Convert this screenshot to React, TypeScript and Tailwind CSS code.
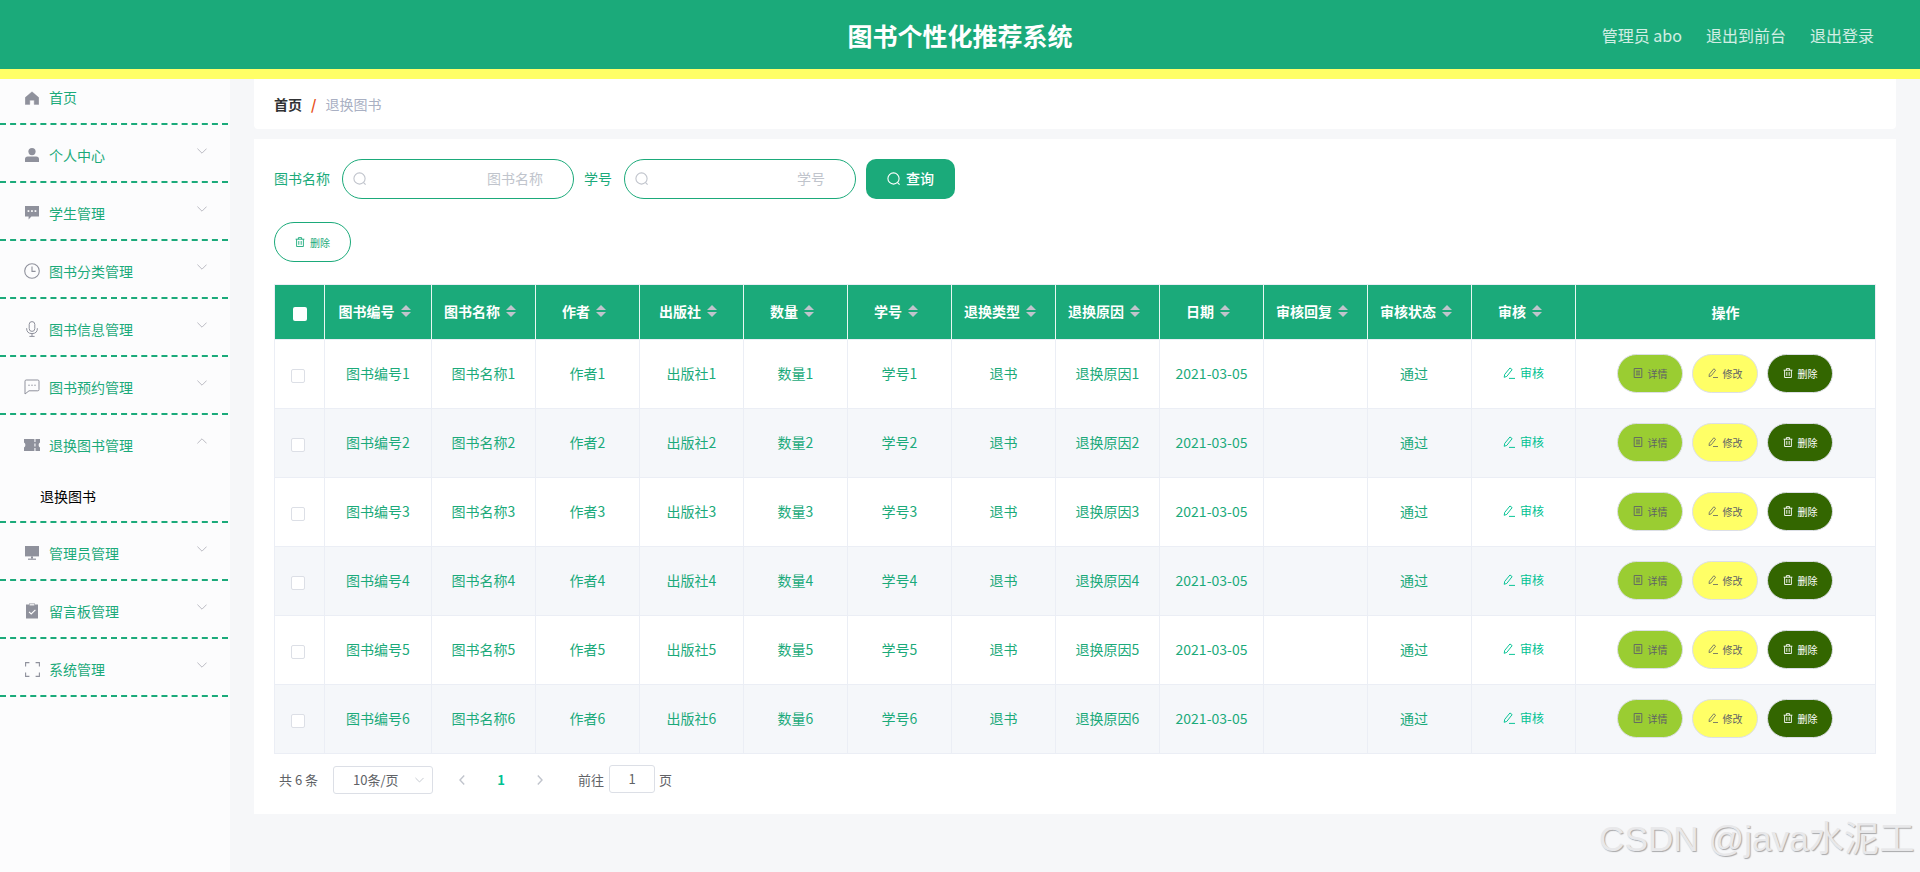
import React from "react";

const Home = () => (
  <svg viewBox="0 0 14 14" className="w-[14px] h-[14px] mt-[2px]" fill="#8f919c">
    <path d="M7 .8 L13.8 6.6 V13.4 H9.2 V9.2 H4.8 V13.4 H.2 V6.6 Z" strokeLinejoin="round" stroke="#8f919c" strokeWidth="0.4" />
  </svg>
);
const User = () => (
  <svg viewBox="0 0 14 14" className="w-[14px] h-[14px]" fill="#8f919c">
    <circle cx="7" cy="3.6" r="3.6" />
    <path d="M0 14 V11 Q0 8.4 2.8 8.4 H11.2 Q14 8.4 14 11 V14 Z" />
  </svg>
);
const Comment = () => (
  <svg viewBox="0 0 14 14" className="w-[14px] h-[14px]">
    <path d="M0 0 H14 V10.4 H6.4 L3.6 13.6 V10.4 H0 Z" fill="#8f919c" />
    <rect x="2.6" y="4.2" width="1.7" height="1.7" fill="#fff" />
    <rect x="6.1" y="4.2" width="1.7" height="1.7" fill="#fff" />
    <rect x="9.6" y="4.2" width="1.7" height="1.7" fill="#fff" />
  </svg>
);
const Clock = () => (
  <svg viewBox="0 0 16 16" className="w-[16px] h-[16px]" fill="none" stroke="#8f919c" strokeWidth="1.1">
    <circle cx="8" cy="8" r="7.3" />
    <path d="M8 3.6 V8.4 H11.6" />
  </svg>
);
const Mic = () => (
  <svg viewBox="0 0 14 16" className="w-[14px] h-[16px]" fill="none" stroke="#8f919c" strokeWidth="1">
    <rect x="4.2" y="0.6" width="5.6" height="9.8" rx="2.8" />
    <path d="M1.6 7.2 Q1.6 12.6 7 12.6 Q12.4 12.6 12.4 7.2 M7 12.6 V15.4 M4.4 15.4 H9.6" />
  </svg>
);
const ChatDot = () => (
  <svg viewBox="0 0 16 16" className="w-[16px] h-[16px]" fill="none" stroke="#8f919c" strokeWidth="1">
    <path d="M2.2 1 H13.8 Q15 1 15 2.2 V10.6 Q15 11.8 13.8 11.8 H5 L1 15 V2.2 Q1 1 2.2 1 Z" strokeLinejoin="round" />
    <circle cx="5" cy="6.3" r="0.7" fill="#8f919c" stroke="none" />
    <circle cx="8" cy="6.3" r="0.7" fill="#8f919c" stroke="none" />
    <circle cx="11" cy="6.3" r="0.7" fill="#8f919c" stroke="none" />
  </svg>
);
const Ticket = () => (
  <svg viewBox="0 0 16 12" className="w-[16px] h-[12px]">
    <path d="M0 0 H16 V3.6 Q14.6 4.2 14.6 6 Q14.6 7.8 16 8.4 V12 H0 V8.4 Q1.4 7.8 1.4 6 Q1.4 4.2 0 3.6 Z" fill="#8f919c" />
    <rect x="10.4" y="0" width="1.1" height="3" fill="#fcfcfd" />
    <rect x="10.4" y="4.5" width="1.1" height="3" fill="#fcfcfd" />
    <rect x="10.4" y="9" width="1.1" height="3" fill="#fcfcfd" />
  </svg>
);
const Platform = () => (
  <svg viewBox="0 0 14 14" className="w-[14px] h-[14px]" fill="#8f919c">
    <rect x="0" y="0" width="14" height="10.4" />
    <rect x="6" y="10.4" width="2" height="2.2" />
    <rect x="3" y="12.6" width="8" height="1.2" />
  </svg>
);
const Claim = () => (
  <svg viewBox="0 0 14 16" className="w-[14px] h-[16px]">
    <path d="M1 1.6 H4 V0.6 H10 V1.6 H13 V15.6 H1 Z" fill="#8f919c" />
    <rect x="4.6" y="1.2" width="4.8" height="1.2" fill="#fff" />
    <path d="M4 8.8 L6.2 11 L10.4 6.8" fill="none" stroke="#fff" strokeWidth="1.1" />
  </svg>
);
const FullScreen = () => (
  <svg viewBox="0 0 15 15" className="w-[15px] h-[15px]" fill="none" stroke="#8f919c" strokeWidth="1.1">
    <path d="M.6 4.4 V.6 H4.4 M10.6 .6 H14.4 V4.4 M14.4 10.6 V14.4 H10.6 M4.4 14.4 H.6 V10.6" />
  </svg>
);

const Chevron = ({ up }: { up?: boolean }) => (
  <svg viewBox="0 0 10 6" className="w-[10px] h-[6px]" fill="none" stroke="#b4b4bc" strokeWidth="0.9">
    <path d={up ? "M.4 5.4 L5 .8 L9.6 5.4" : "M.4 .6 L5 5.2 L9.6 .6"} />
  </svg>
);

const SearchIcon = ({ color = "#c0c4cc" }: { color?: string }) => (
  <svg viewBox="0 0 14 14" className="w-[14px] h-[14px]" fill="none" stroke={color} strokeWidth="1.1">
    <circle cx="6.5" cy="6.5" r="5.6" />
    <path d="M10.6 10.6 L12.6 12.6" />
  </svg>
);

const Trash = ({ color }: { color: string }) => (
  <svg viewBox="0 0 10 10" className="w-[10px] h-[10px]" fill="none" stroke={color} strokeWidth="0.9">
    <path d="M.6 2.2 H9.4 M3.4 2.2 V.6 H6.6 V2.2 M1.6 2.2 V9.5 H8.4 V2.2 M3.8 4 V7.8 M6.2 4 V7.8" />
  </svg>
);
const Tickets = ({ color }: { color: string }) => (
  <svg viewBox="0 0 10 10" className="w-[10px] h-[10px]" fill="none" stroke={color} strokeWidth="0.9">
    <path d="M1.2 .5 H8.8 V9.5 H1.2 Z M3 3.2 H7 M3 5 H7 M3 6.8 H7" />
  </svg>
);
const Edit = ({ color, size = "w-[10px] h-[10px]" }: { color: string; size?: string }) => (
  <svg viewBox="0 0 10 10" className={size} fill="none" stroke={color} strokeWidth="0.8">
    <path d="M1 8.6 L1.4 6.2 L5.8 .8 L7.6 2.2 L3.2 7.8 Z M5 9.5 H10" />
  </svg>
);

const Caret = () => (
  <span className="flex flex-col gap-[2px] ml-[6px] mr-[7px]">
    <span className="w-0 h-0 border-x-[5px] border-x-transparent border-b-[5px] border-b-[#c0c4cc]" />
    <span className="w-0 h-0 border-x-[5px] border-x-transparent border-t-[5px] border-t-[#c0c4cc]" />
  </span>
);

const menu: { label: string; icon: React.ReactNode; arrow?: boolean; open?: boolean }[] = [
  { label: "首页", icon: <Home /> },
  { label: "个人中心", icon: <User />, arrow: true },
  { label: "学生管理", icon: <Comment />, arrow: true },
  { label: "图书分类管理", icon: <Clock />, arrow: true },
  { label: "图书信息管理", icon: <Mic />, arrow: true },
  { label: "图书预约管理", icon: <ChatDot />, arrow: true },
  { label: "退换图书管理", icon: <Ticket />, arrow: true, open: true },
  { label: "管理员管理", icon: <Platform />, arrow: true },
  { label: "留言板管理", icon: <Claim />, arrow: true },
  { label: "系统管理", icon: <FullScreen />, arrow: true },
];

const heads = ["图书编号", "图书名称", "作者", "出版社", "数量", "学号", "退换类型", "退换原因", "日期", "审核回复", "审核状态", "审核"];

const rows = [1, 2, 3, 4, 5, 6];

const td = "border-r border-b border-[#ebeef5] p-0 pb-[2px]";

const CheckBox = ({ head }: { head?: boolean }) =>
  head ? (
    <span className="inline-block w-[14px] h-[14px] rounded-[2px] bg-white align-middle" />
  ) : (
    <span className="inline-block w-[14px] h-[14px] rounded-[2px] bg-white border border-[#dcdfe6] align-middle mr-[3px] mt-[2px]" />
  );

const OpButton = ({ bg, fg, icon, label }: { bg: string; fg: string; icon: React.ReactNode; label: string }) => (
  <button className={`w-[66px] h-[39px] rounded-[20px] border border-[#dcdfe6] flex items-center justify-center gap-[5px] text-[10px] ${bg} ${fg}`}>
    {icon}
    <span>{label}</span>
  </button>
);

const SearchInput = ({ placeholder }: { placeholder: string }) => (
  <div className="relative w-[232px] h-[40px]">
    <span className="absolute left-[11px] top-[13px] flex">
      <SearchIcon />
    </span>
    <input
      readOnly
      placeholder={placeholder}
      className="w-full h-full rounded-[20px] border border-[#1baa7a] bg-white text-right pr-[30px] pb-[2px] text-[14px] outline-none placeholder:text-[#c0c4cc]"
    />
  </div>
);

export default function App() {
  return (
    <div className="relative w-[1920px] h-[872px] overflow-hidden flex flex-col bg-[#f6f7f9] [font-family:'Noto_Sans_CJK_SC','Noto_Sans',sans-serif] text-[14px]">
      <header className="relative z-10 h-[79px] shrink-0 bg-[#1baa7a] border-b-[10px] border-[#ffff66] flex items-center justify-between">
        <div className="w-[400px]" />
        <h1 className="text-[25px] leading-none font-bold text-white pt-[2px]">图书个性化推荐系统</h1>
        <nav className="w-[400px] flex justify-end gap-[24px] pr-[46px] text-[16px] text-white/80">
          <span>管理员 abo</span>
          <span>退出到前台</span>
          <span>退出登录</span>
        </nav>
      </header>

      <div className="flex flex-1 min-h-0">
        <aside className="w-[230px] shrink-0 bg-[#fcfcfd]">
          <ul className="w-[228px] -mt-[12px]">
            {menu.map((m) => (
              <li key={m.label} className="border-b-2 border-dashed border-[#1baa7a]">
                <div className="h-[56px] flex items-center pt-[4px] relative text-[#1baa7a]">
                  <span className="w-[16px] ml-[24px] flex justify-center">{m.icon}</span>
                  <span className="ml-[9px]">{m.label}</span>
                  {m.arrow && (
                    <span className="absolute left-[197px] top-[23px] flex">
                      <Chevron up={m.open} />
                    </span>
                  )}
                </div>
                {m.open && <div className="h-[50px] flex items-center pl-[40px] text-black">退换图书</div>}
              </li>
            ))}
          </ul>
        </aside>

        <main className="flex-1 px-[24px]">
          <div className="h-[50px] bg-white rounded-b-[4px] flex items-center pl-[20px]">
            <span className="font-bold text-[#303133]">首页</span>
            <span className="mx-[9px] font-bold text-[#e8501a]">/</span>
            <span className="text-[#a9b0c3]">退换图书</span>
          </div>

          <section className="mt-[10px] h-[675px] bg-white p-[20px]">
            <div className="flex items-center text-[#1baa7a]">
              <span className="-mt-[1px]">图书名称</span>
              <span className="ml-[12px]"><SearchInput placeholder="图书名称" /></span>
              <span className="ml-[10px] -mt-[1px]">学号</span>
              <span className="ml-[12px]"><SearchInput placeholder="学号" /></span>
              <button className="ml-[10px] w-[89px] h-[40px] rounded-[10px] bg-[#1baa7a] text-white font-medium flex items-center justify-center gap-[5px] pb-[1px]">
                <SearchIcon color="#ffffff" />
                <span>查询</span>
              </button>
            </div>

            <button className="mt-[23px] w-[77px] h-[40px] rounded-[20px] border border-[#1baa7a] bg-white text-[#1baa7a] text-[10px] flex items-center justify-center gap-[5px]">
              <Trash color="#1baa7a" />
              <span>删除</span>
            </button>

            <table className="mt-[22px] w-[1602px] table-fixed border-separate border-spacing-0 border-l border-t border-[#ebeef5]">
              <colgroup>
                <col className="w-[50px]" />
                <col className="w-[107px]" />
                {heads.slice(1).map((h) => (
                  <col key={h} className="w-[104px]" />
                ))}
                <col className="w-[300px]" />
              </colgroup>
              <thead>
                <tr className="h-[55px] bg-[#1baa7a] text-white">
                  <th className="border-r border-r-white/90 border-b border-b-[#ebeef5] p-0 text-center">
                    <CheckBox head />
                  </th>
                  {heads.map((h) => (
                    <th key={h} className="border-r border-r-white/90 border-b border-b-[#ebeef5] p-0 font-bold">
                      <span className="flex items-center justify-center -mt-[2px]">
                        {h}
                        <Caret />
                      </span>
                    </th>
                  ))}
                  <th className="border-r border-b border-[#ebeef5] p-0 font-bold">操作</th>
                </tr>
              </thead>
              <tbody>
                {rows.map((n) => (
                  <tr key={n} className={`h-[69px] ${n % 2 === 0 ? "bg-[#f5f7fa]" : "bg-white"} text-[#1baa7a] text-center`}>
                    <td className={td}>
                      <CheckBox />
                    </td>
                    <td className={td}>图书编号{n}</td>
                    <td className={td}>图书名称{n}</td>
                    <td className={td}>作者{n}</td>
                    <td className={td}>出版社{n}</td>
                    <td className={td}>数量{n}</td>
                    <td className={td}>学号{n}</td>
                    <td className={td}>退书</td>
                    <td className={td}>退换原因{n}</td>
                    <td className={td}>2021-03-05</td>
                    <td className={td}></td>
                    <td className={`${td} pr-[11px]`}>通过</td>
                    <td className={`${td} text-[12px] text-[#00c292]`}>
                      <span className="inline-flex items-center gap-[5px]">
                        <Edit color="#00c292" size="w-[12px] h-[12px]" />
                        审核
                      </span>
                    </td>
                    <td className={td}>
                      <div className="flex justify-center gap-[9px] pr-[1px]">
                        <OpButton bg="bg-[#9acd32]" fg="text-[#606266]" icon={<Tickets color="#606266" />} label="详情" />
                        <OpButton bg="bg-[#ffff66]" fg="text-[#606266]" icon={<Edit color="#606266" />} label="修改" />
                        <OpButton bg="bg-[#336600]" fg="text-white" icon={<Trash color="#ffffff" />} label="删除" />
                      </div>
                    </td>
                  </tr>
                ))}
              </tbody>
            </table>

            <div className="mt-[12px] h-[28px] flex items-center pl-[5px] text-[13px] text-[#606266]">
              <span>共 6 条</span>
              <div className="ml-[15px] w-[100px] h-[28px] rounded-[3px] border border-[#dcdfe6] flex items-center pl-[19px] relative">
                10条/页
                <span className="absolute right-[8px] top-[10px] flex">
                  <svg viewBox="0 0 10 6" className="w-[9px] h-[6px]" fill="none" stroke="#c0c4cc" strokeWidth="1">
                    <path d="M.5 .7 L5 5.2 L9.5 .7" />
                  </svg>
                </span>
              </div>
              <svg viewBox="0 0 6 10" className="ml-[26px] w-[6px] h-[10px]" fill="none" stroke="#c0c4cc" strokeWidth="1.4">
                <path d="M5.2 .6 L1 5 L5.2 9.4" />
              </svg>
              <span className="ml-[32px] w-[8px] text-center font-bold text-[#00c292]">1</span>
              <svg viewBox="0 0 6 10" className="ml-[32px] w-[6px] h-[10px]" fill="none" stroke="#c0c4cc" strokeWidth="1.4">
                <path d="M.8 .6 L5 5 L.8 9.4" />
              </svg>
              <span className="ml-[35px]">前往</span>
              <div className="ml-[5px] w-[46px] h-[28px] -mt-[2px] rounded-[3px] border border-[#dcdfe6] flex items-center justify-center">1</div>
              <span className="ml-[4px]">页</span>
            </div>
          </section>
        </main>
      </div>

      <div className="absolute left-[1599px] top-[813px] whitespace-nowrap text-[35.2px] leading-[52px] [font-family:'Liberation_Sans','Noto_Sans_CJK_SC',sans-serif] text-[#e8e8ea] [text-shadow:1px_1px_1px_#a8a8aa]">
        CSDN @java水泥工
      </div>
    </div>
  );
}
